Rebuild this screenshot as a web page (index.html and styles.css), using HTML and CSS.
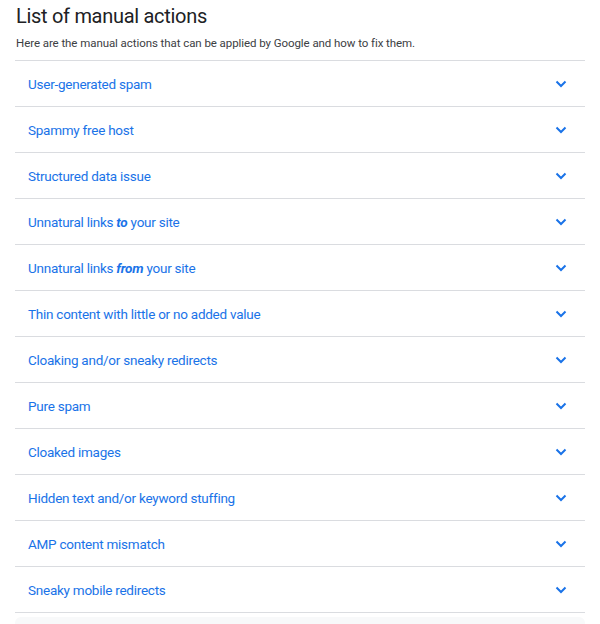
FILE: index.html
```html
<!DOCTYPE html>
<html>
<head>
<meta charset="utf-8">
<link rel="stylesheet" href="styles.css">
</head>
<body>
<div class="page">
  <h1 class="title">List of manual actions</h1>
  <p class="intro">Here are the manual actions that can be applied by Google and how to fix them.</p>
  <ul class="list">
    <li class="item"><span class="label">User-generated spam</span><svg class="chev" viewBox="0 0 12 8"><path d="M1.5 1.5 6 6 10.5 1.5"/></svg></li>
    <li class="item"><span class="label">Spammy free host</span><svg class="chev" viewBox="0 0 12 8"><path d="M1.5 1.5 6 6 10.5 1.5"/></svg></li>
    <li class="item"><span class="label">Structured data issue</span><svg class="chev" viewBox="0 0 12 8"><path d="M1.5 1.5 6 6 10.5 1.5"/></svg></li>
    <li class="item"><span class="label">Unnatural links <b><i>to</i></b> your site</span><svg class="chev" viewBox="0 0 12 8"><path d="M1.5 1.5 6 6 10.5 1.5"/></svg></li>
    <li class="item"><span class="label">Unnatural links <b><i>from</i></b> your site</span><svg class="chev" viewBox="0 0 12 8"><path d="M1.5 1.5 6 6 10.5 1.5"/></svg></li>
    <li class="item"><span class="label">Thin content with little or no added value</span><svg class="chev" viewBox="0 0 12 8"><path d="M1.5 1.5 6 6 10.5 1.5"/></svg></li>
    <li class="item"><span class="label">Cloaking and/or sneaky redirects</span><svg class="chev" viewBox="0 0 12 8"><path d="M1.5 1.5 6 6 10.5 1.5"/></svg></li>
    <li class="item"><span class="label">Pure spam</span><svg class="chev" viewBox="0 0 12 8"><path d="M1.5 1.5 6 6 10.5 1.5"/></svg></li>
    <li class="item"><span class="label">Cloaked images</span><svg class="chev" viewBox="0 0 12 8"><path d="M1.5 1.5 6 6 10.5 1.5"/></svg></li>
    <li class="item"><span class="label">Hidden text and/or keyword stuffing</span><svg class="chev" viewBox="0 0 12 8"><path d="M1.5 1.5 6 6 10.5 1.5"/></svg></li>
    <li class="item"><span class="label">AMP content mismatch</span><svg class="chev" viewBox="0 0 12 8"><path d="M1.5 1.5 6 6 10.5 1.5"/></svg></li>
    <li class="item"><span class="label">Sneaky mobile redirects</span><svg class="chev" viewBox="0 0 12 8"><path d="M1.5 1.5 6 6 10.5 1.5"/></svg></li>
  </ul>
  <div class="footer-box"></div>
</div>
</body>
</html>
```
FILE: styles.css
```css
html, body {
  margin: 0;
  padding: 0;
  background: #ffffff;
}
body {
  font-family: Roboto, "Liberation Sans", Arial, sans-serif;
  color: #202124;
}
.page {
  padding: 4px 15px 0 15px;
}
.title {
  margin: 0 0 0 1px;
  font-size: 20px;
  line-height: 24px;
  font-weight: 400;
  letter-spacing: -0.3px;
  color: #202124;
}
.intro {
  margin: 7px 0 0 1px;
  font-size: 11.5px;
  line-height: 16px;
  letter-spacing: -0.07px;
  color: #3c4043;
}
.list {
  list-style: none;
  margin: 9px 0 0 0;
  padding: 0;
  border-top: 1px solid #dadce0;
}
.item {
  display: flex;
  align-items: center;
  justify-content: space-between;
  height: 45px;
  border-bottom: 1px solid #dadce0;
  padding: 0 18px 0 13px;
}
.label {
  font-size: 13.5px;
  letter-spacing: -0.25px;
  color: #1a73e8;
}
.label b {
  font-weight: 700;
}
.chev {
  width: 12px;
  height: 8px;
  fill: none;
  stroke: #1a73e8;
  stroke-width: 2;
}
.footer-box {
  margin-top: 4px;
  height: 20px;
  background: #f8f9fa;
  border-radius: 6px;
}
```
